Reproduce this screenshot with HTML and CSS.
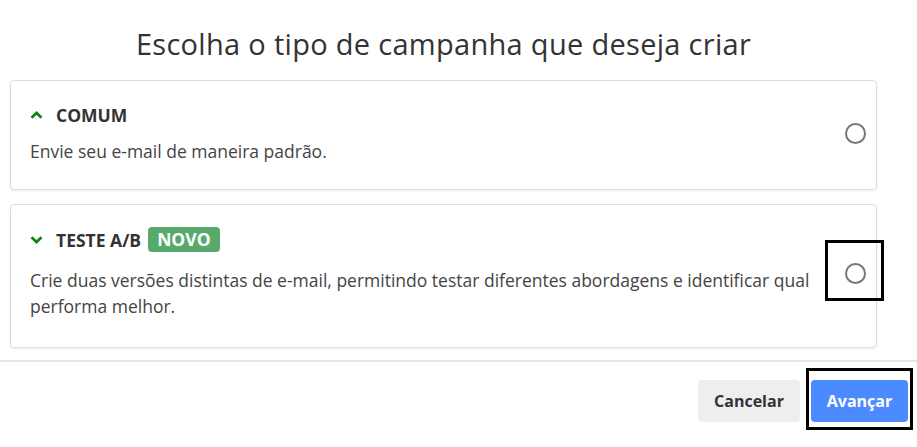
FILE: index.html
```html
<!DOCTYPE html>
<html lang="pt-BR">
<head>
    <meta charset="UTF-8">
    <meta name="viewport" content="width=device-width, initial-scale=1.0">
    <title>Tipo de campanha</title>
    <link rel="stylesheet" href="styles.css">
</head>
<body>
    <div class="modal">
        <h1 class="title">Escolha o tipo de campanha que deseja criar</h1>

        <div class="options">
            <label class="option">
                <div class="option-body">
                    <div class="option-head">
                        <svg class="chevron" width="13" height="8" viewBox="0 0 13 8"><path d="M1.5 6.8 L6.5 2 L11.5 6.8" fill="none" stroke="#0a8a12" stroke-width="2.8"/></svg>
                        <span class="option-name">COMUM</span>
                    </div>
                    <p class="option-desc">Envie seu e-mail de maneira padrão.</p>
                </div>
                <span class="radio"></span>
            </label>

            <label class="option">
                <div class="option-body">
                    <div class="option-head">
                        <svg class="chevron" width="13" height="8" viewBox="0 0 13 8"><path d="M1.5 1.2 L6.5 6 L11.5 1.2" fill="none" stroke="#0a8a12" stroke-width="2.8"/></svg>
                        <span class="option-name">TESTE A/B</span>
                        <span class="badge">NOVO</span>
                    </div>
                    <p class="option-desc">Crie duas versões distintas de e-mail, permitindo testar diferentes abordagens e identificar qual performa melhor.</p>
                </div>
                <span class="radio marked"></span>
            </label>
        </div>

        <div class="footer">
            <button class="btn btn-cancel">Cancelar</button>
            <div class="mark-wrap">
                <button class="btn btn-next">Avançar</button>
            </div>
        </div>
    </div>
</body>
</html>
```

FILE: styles.css
```css
body {
    font-family: "Open Sans", Arial, sans-serif;
    background-color: #fff;
    color: #333;
    margin: 0;
    padding: 0;
    overflow: hidden;
}
.modal {
    min-height: 447px;
}
.title {
    font-size: 29px;
    font-weight: 400;
    letter-spacing: 0.3px;
    text-align: center;
    margin: 0;
    padding: 26px 30px 0 0;
    line-height: 36px;
    height: 54px;
    color: #333;
}
.options {
    display: flex;
    flex-direction: column;
    gap: 14px;
    padding: 0 40px 0 10px;
}
.option {
    display: flex;
    align-items: center;
    border: 1px solid #ddd;
    border-radius: 4px;
    box-shadow: 0 1px 3px rgba(0, 0, 0, 0.08);
    padding: 22px 10px 25px 19px;
    cursor: pointer;
}
.option-body {
    flex: 1;
    padding-right: 20px;
}
.option-head {
    display: flex;
    align-items: center;
    min-height: 24px;
}
.chevron {
    margin: 0 13px 0 0;
}
.option-name {
    font-size: 17.5px;
    font-weight: 700;
    color: #333;
}
.badge {
    margin-left: 7px;
    background-color: #58aa6c;
    color: #fff;
    font-size: 17.5px;
    font-weight: 700;
    padding: 0 9px;
    line-height: 25px;
    border-radius: 4px;
}
.option-desc {
    margin: 11px 0 0;
    font-size: 17.5px;
    line-height: 26px;
    color: #444;
}
.option + .option .option-desc {
    margin-top: 15px;
}
.option + .option {
    padding-bottom: 28px;
}
.radio {
    position: relative;
    width: 21px;
    height: 21px;
    box-sizing: border-box;
    border: 2px solid #777;
    border-radius: 50%;
    flex-shrink: 0;
}
.radio.marked::after {
    content: "";
    position: absolute;
    top: -25px;
    left: -22px;
    right: -20px;
    bottom: -19px;
    border: 3px solid #000;
}
.footer {
    margin-top: 12px;
    border-top: 2px solid #e6e6e6;
    display: flex;
    align-items: flex-start;
    justify-content: flex-end;
    gap: 11px;
    padding: 18px 9px 0 0;
}
.mark-wrap {
    position: relative;
    display: flex;
}
.mark-wrap::after {
    content: "";
    position: absolute;
    top: -12px;
    left: -5px;
    right: -5px;
    bottom: -8px;
    border: 3px solid #000;
}
.btn {
    font-family: inherit;
    font-size: 16px;
    font-weight: 700;
    height: 42px;
    border: none;
    border-radius: 4px;
    cursor: pointer;
}
.btn-cancel {
    width: 102px;
    background-color: #eee;
    color: #333;
}
.btn-next {
    width: 97px;
    background-color: #4b8bff;
    color: #fff;
}
```
